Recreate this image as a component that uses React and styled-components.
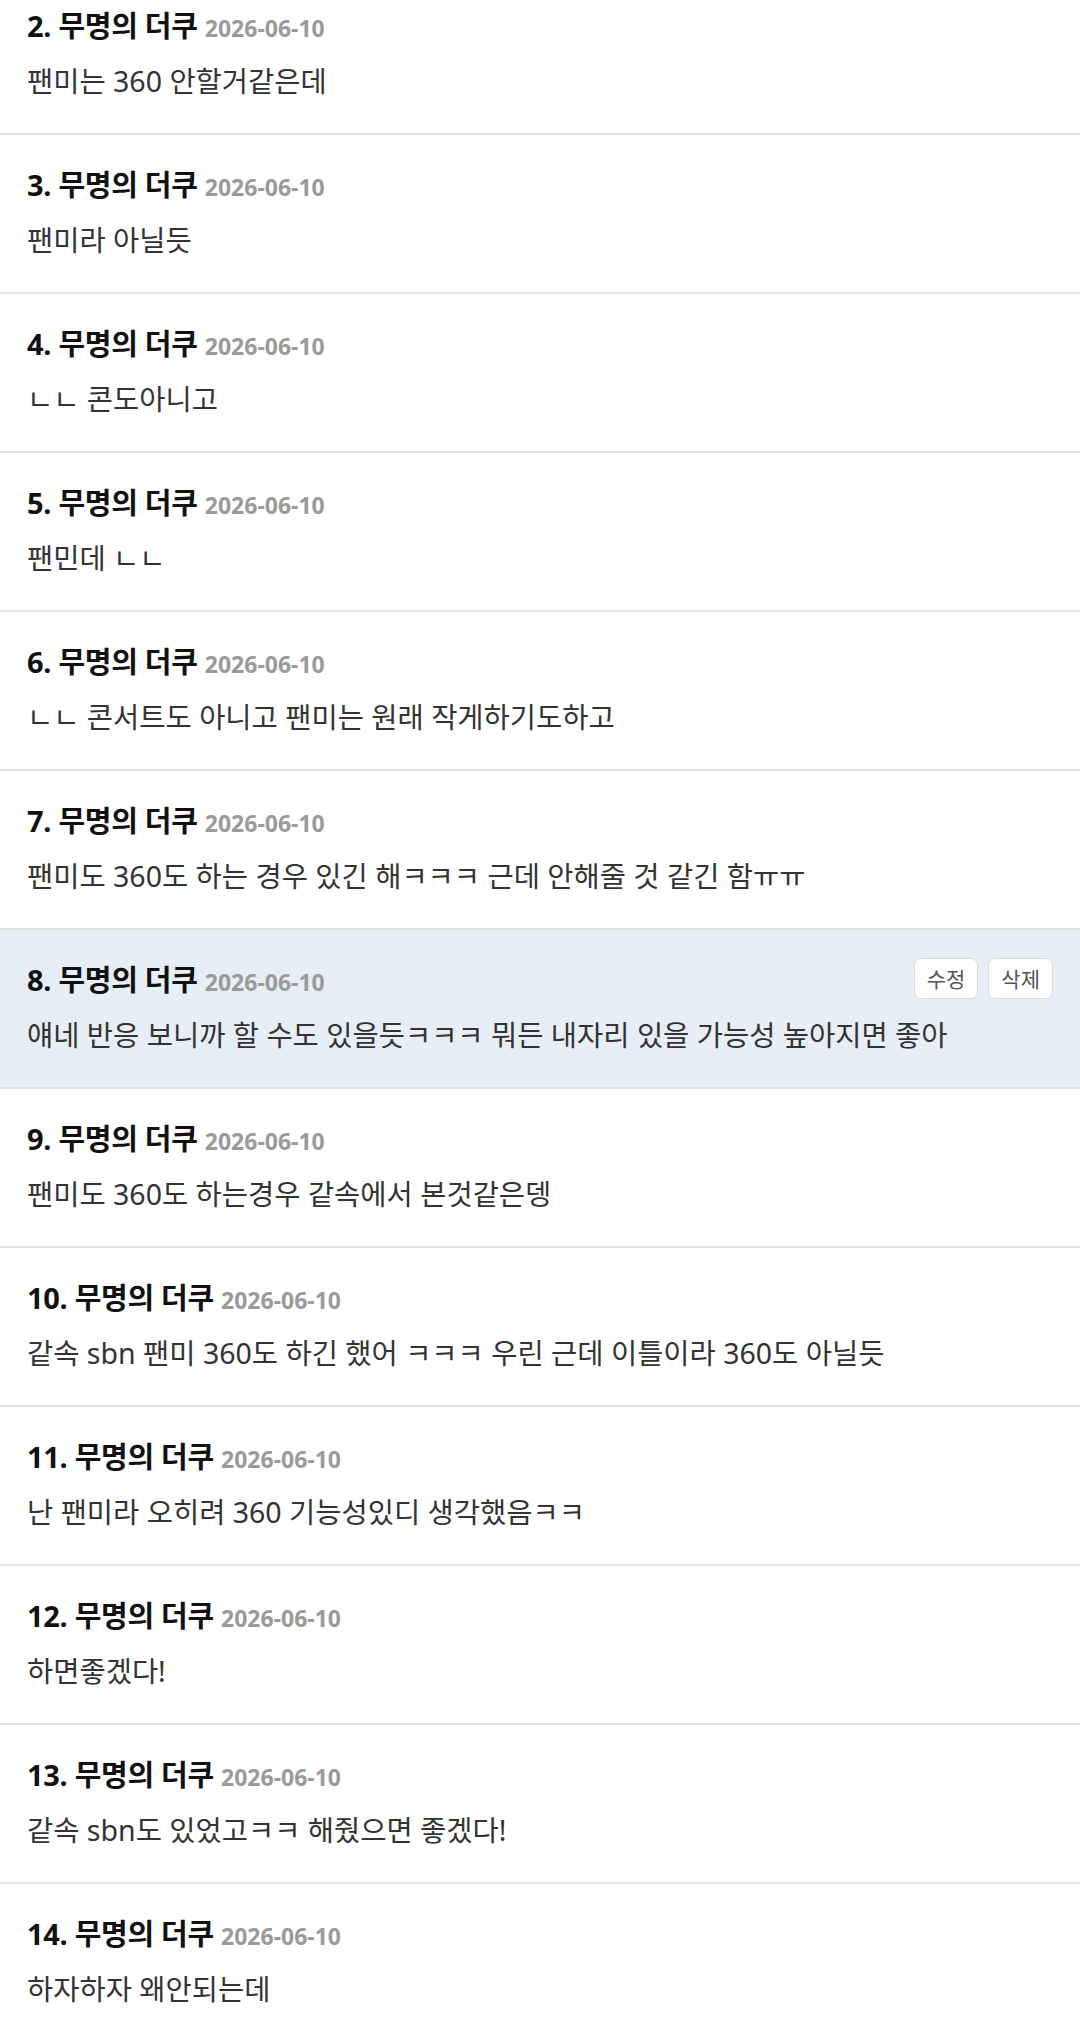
import styled, { createGlobalStyle } from 'styled-components';

const GlobalStyle = createGlobalStyle`
  html, body {
    margin: 0;
    padding: 0;
    background: #fff;
  }
  body {
    font-family: 'Noto Sans', 'Noto Sans CJK KR', sans-serif;
    overflow: hidden;
  }
`;

const comments = [
  { no: 2, text: '팬미는 360 안할거같은데' },
  { no: 3, text: '팬미라 아닐듯' },
  { no: 4, text: 'ㄴㄴ 콘도아니고' },
  { no: 5, text: '팬민데 ㄴㄴ' },
  { no: 6, text: 'ㄴㄴ 콘서트도 아니고 팬미는 원래 작게하기도하고' },
  { no: 7, text: '팬미도 360도 하는 경우 있긴 해ㅋㅋㅋ 근데 안해줄 것 같긴 함ㅠㅠ' },
  { no: 8, text: '얘네 반응 보니까 할 수도 있을듯ㅋㅋㅋ 뭐든 내자리 있을 가능성 높아지면 좋아', mine: true },
  { no: 9, text: '팬미도 360도 하는경우 같속에서 본것같은뎅' },
  { no: 10, text: '같속 sbn 팬미 360도 하긴 했어 ㅋㅋㅋ 우린 근데 이틀이라 360도 아닐듯' },
  { no: 11, text: '난 팬미라 오히려 360 기능성있디 생각했음ㅋㅋ' },
  { no: 12, text: '하면좋겠다!' },
  { no: 13, text: '같속 sbn도 있었고ㅋㅋ 해줬으면 좋겠다!' },
  { no: 14, text: '하자하자 왜안되는데' },
];

export default function App() {
  return (
    <>
      <GlobalStyle />
      <List>
        {comments.map((c) => (
          <Row key={c.no} $mine={c.mine}>
            <Head>
              <Author>
                {c.no}. 무명의 더쿠 <Date>2026-06-10</Date>
              </Author>
              {c.mine && (
                <Actions>
                  <SmallButton>수정</SmallButton>
                  <SmallButton>삭제</SmallButton>
                </Actions>
              )}
            </Head>
            <Body>{c.text}</Body>
          </Row>
        ))}
      </List>
    </>
  );
}

const List = styled.ul`
  list-style: none;
  margin: -24px 0 0;
  padding: 0;
`;

const Row = styled.li`
  padding: 29px 27px 32px;
  border-bottom: 2px solid #e2e2e2;
  background: ${({ $mine }) => ($mine ? '#e8eef5' : '#fff')};
`;

const Head = styled.div`
  display: flex;
  align-items: center;
  justify-content: space-between;
  height: 38px;
`;

const Author = styled.div`
  font-size: 29px;
  font-weight: 700;
  color: #111;
  letter-spacing: -0.3px;
  white-space: nowrap;
`;

const Date = styled.span`
  font-size: 23px;
  font-weight: 700;
  color: #9a9a9a;
  letter-spacing: 0;
`;

const Actions = styled.div`
  display: flex;
  gap: 10px;
`;

const SmallButton = styled.button`
  height: 41px;
  min-width: 64px;
  padding: 0 12px;
  border: 1.5px solid #dcdcdc;
  border-radius: 7px;
  background: #fff;
  color: #555;
  font-family: 'Noto Sans', 'Noto Sans CJK KR', sans-serif;
  font-size: 21px;
`;

const Body = styled.p`
  margin: 18px 0 0;
  font-size: 28.5px;
  line-height: 40px;
  color: #333;
  white-space: nowrap;
`;
